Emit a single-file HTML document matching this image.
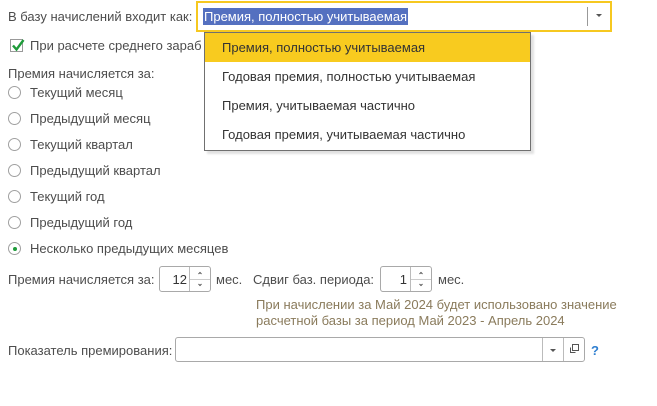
<!DOCTYPE html>
<html><head><meta charset="utf-8"><style>
body{margin:0;width:657px;height:406px;background:#fff;font-family:"Liberation Sans",Arial,sans-serif;font-size:13px;color:#4d4d4d;position:relative;overflow:hidden}
.a{position:absolute;white-space:nowrap;line-height:15px}
.r{position:absolute;left:8px;width:13px;height:13px;border:1px solid #a0a0a0;border-radius:50%;box-sizing:border-box;background:#fff}
.box{position:absolute;border:1px solid #a9a9a9;border-radius:3px;box-sizing:border-box;background:#fff}
</style></head><body>
<div class="a" style="left:8px;top:9px">В базу начислений входит как:</div>
<div style="position:absolute;left:196px;top:1px;width:416px;height:31px;border:2px solid #f6c820;box-sizing:border-box;background:#fff"></div>
<div class="a" style="left:203px;top:8px;height:17px;line-height:17px;background:#5470c0;color:#fff;padding:0 1px">Премия, полностью учитываемая</div>
<div style="position:absolute;left:587px;top:7px;width:1px;height:19px;background:#999"></div>
<div style="position:absolute;left:596px;top:14px;border-left:3px solid transparent;border-right:3px solid transparent;border-top:3px solid #555"></div>

<div style="position:absolute;left:10px;top:39px;width:13px;height:13px;border:1px solid #999;box-sizing:border-box;background:#fff"></div>
<svg style="position:absolute;left:10px;top:37px" width="16" height="16"><path d="M3 8.5 L6.5 12.5 L13.5 3" stroke="#1e9b3a" stroke-width="2.4" fill="none"/></svg>
<div class="a" style="left:30px;top:38px">При расчете среднего зараб</div>
<div class="a" style="left:8px;top:66px">Премия начисляется за:</div>

<div class="r" style="top:86px"></div><div class="a" style="left:30px;top:85px">Текущий месяц</div>
<div class="r" style="top:112px"></div><div class="a" style="left:30px;top:111px">Предыдущий месяц</div>
<div class="r" style="top:138px"></div><div class="a" style="left:30px;top:137px">Текущий квартал</div>
<div class="r" style="top:164px"></div><div class="a" style="left:30px;top:163px">Предыдущий квартал</div>
<div class="r" style="top:190px"></div><div class="a" style="left:30px;top:189px">Текущий год</div>
<div class="r" style="top:216px"></div><div class="a" style="left:30px;top:215px">Предыдущий год</div>
<div class="r" style="top:242px"></div><div style="position:absolute;left:13px;top:247px;width:4px;height:4px;border-radius:50%;background:#1e9b3a"></div>
<div class="a" style="left:30px;top:241px">Несколько предыдущих месяцев</div>

<div class="a" style="left:8px;top:272px">Премия начисляется за:</div>
<div class="box" style="left:159px;top:266px;width:52px;height:26px"></div>
<div class="a" style="left:168px;top:272px;width:19px;text-align:right;color:#333">12</div>
<div style="position:absolute;left:189px;top:267px;width:1px;height:24px;background:#bbb"></div>
<div style="position:absolute;left:190px;top:279px;width:20px;height:1px;background:#ccc"></div>
<svg style="position:absolute;left:190px;top:267px" width="20" height="24"><path d="M8.5 7 L10 5.5 L11.5 7 M8.5 17 L10 18.5 L11.5 17" stroke="#555" fill="none"/></svg>
<div class="a" style="left:216px;top:272px">мес.</div>
<div class="a" style="left:253px;top:272px">Сдвиг баз. периода:</div>
<div class="box" style="left:380px;top:266px;width:52px;height:26px"></div>
<div class="a" style="left:388px;top:272px;width:19px;text-align:right;color:#333">1</div>
<div style="position:absolute;left:410px;top:267px;width:1px;height:24px;background:#bbb"></div>
<div style="position:absolute;left:411px;top:279px;width:20px;height:1px;background:#ccc"></div>
<svg style="position:absolute;left:411px;top:267px" width="20" height="24"><path d="M8.5 7 L10 5.5 L11.5 7 M8.5 17 L10 18.5 L11.5 17" stroke="#555" fill="none"/></svg>
<div class="a" style="left:438px;top:272px">мес.</div>
<div class="a" style="left:256px;top:297px;color:#8a7b5c">При начислении за Май 2024 будет использовано значение</div>
<div class="a" style="left:256px;top:313px;color:#8a7b5c">расчетной базы за период Май 2023 - Апрель 2024</div>

<div class="a" style="left:8px;top:343px">Показатель премирования:</div>
<div class="box" style="left:175px;top:337px;width:410px;height:25px"></div>
<div style="position:absolute;left:542px;top:338px;width:1px;height:23px;background:#bbb"></div>
<div style="position:absolute;left:563px;top:338px;width:1px;height:23px;background:#bbb"></div>
<div style="position:absolute;left:550px;top:349px;border-left:3px solid transparent;border-right:3px solid transparent;border-top:3px solid #555"></div>
<svg style="position:absolute;left:568px;top:343px" width="12" height="12"><rect x="4.5" y="1.5" width="6" height="6" fill="none" stroke="#555"/><path d="M2.5 4.5 V9.5 H7.5" fill="none" stroke="#555"/></svg>
<div class="a" style="left:591px;top:343px;color:#2f7fd0;font-weight:bold">?</div>

<div style="position:absolute;left:204px;top:32px;width:327px;height:119px;border:1px solid #707070;box-sizing:border-box;background:#fff;box-shadow:3px 3px 2px rgba(0,0,0,0.12)"></div>
<div style="position:absolute;left:205px;top:33px;width:325px;height:29px;background:#f8cb1f"></div>
<div class="a" style="left:222px;top:40px;color:#333">Премия, полностью учитываемая</div>
<div class="a" style="left:222px;top:69px;color:#333">Годовая премия, полностью учитываемая</div>
<div class="a" style="left:222px;top:98px;color:#333">Премия, учитываемая частично</div>
<div class="a" style="left:222px;top:127px;color:#333">Годовая премия, учитываемая частично</div>
</body></html>
